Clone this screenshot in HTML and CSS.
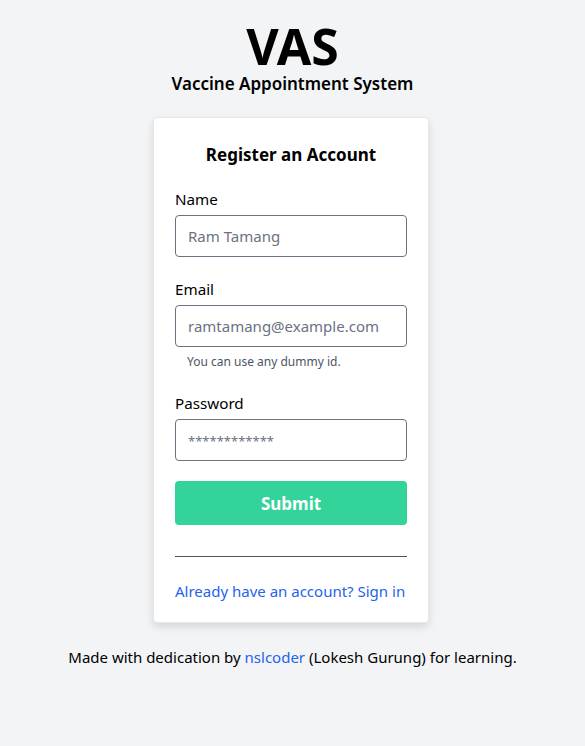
FILE: index.html
```html
<!DOCTYPE html>
<html>
<head>
<meta charset="utf-8">
<link rel="stylesheet" href="styles.css">
</head>
<body>
<main class="page">
  <header class="brand">
    <h1 class="brand-title">VAS</h1>
    <p class="brand-sub">Vaccine Appointment System</p>
  </header>
  <section class="card">
    <h2 class="card-title">Register an Account</h2>
    <form class="form">
      <div class="field">
        <label class="label">Name</label>
        <input class="input" type="text" placeholder="Ram Tamang">
      </div>
      <div class="field">
        <label class="label">Email</label>
        <input class="input" type="text" placeholder="ramtamang@example.com">
        <span class="hint">You can use any dummy id.</span>
      </div>
      <div class="field">
        <label class="label">Password</label>
        <input class="input input-pass" type="text" placeholder="************">
      </div>
      <button class="submit" type="button">Submit</button>
    </form>
    <hr class="divider">
    <a class="signin" href="#">Already have an account? Sign in</a>
  </section>
  <p class="footer">Made with dedication by <a class="footer-link" href="#">nslcoder</a> (Lokesh Gurung) for learning.</p>
</main>
</body>
</html>
```
FILE: styles.css
```css
* { box-sizing: border-box; }
html, body { margin: 0; padding: 0; }
body {
  background: #f3f4f6;
  font-family: "Noto Sans", "Open Sans", sans-serif;
  color: #000;
}
.page {
  display: flex;
  flex-direction: column;
  align-items: center;
  padding-top: 20px;
}
.brand { text-align: center; }
.brand-title {
  margin: 0;
  font-size: 50px;
  line-height: 53px;
  font-weight: 700;
}
.brand-sub {
  margin: 0;
  font-size: 17px;
  line-height: 22px;
  font-weight: 600;
}
.card {
  margin: 22px 3px 0 0;
  width: 276px;
  background: #fff;
  border: 1px solid #e5e7eb;
  border-radius: 4px;
  box-shadow: 0 4px 8px rgba(0,0,0,0.12);
  padding: 24px 21px 20px;
}
.card-title {
  margin: 0 0 20px;
  text-align: center;
  font-size: 17px;
  line-height: 26px;
  font-weight: 700;
}
.form { display: flex; flex-direction: column; }
.field { display: flex; flex-direction: column; margin-bottom: 21px; }
.label {
  font-size: 15.2px;
  line-height: 22px;
  margin-bottom: 5px;
}
.input {
  height: 42px;
  border: 1px solid #6b7280;
  border-radius: 4px;
  padding: 0 12px;
  font-family: inherit;
  font-size: 15px;
  color: #111;
  background: #fff;
}
.input::placeholder { color: #6b7280; }
.input-pass::placeholder { font-size: 13px; }
.hint {
  margin-top: 7px;
  margin-bottom: 1px;
  padding-left: 12px;
  font-size: 12px;
  line-height: 16px;
  color: #4b5563;
}
.submit {
  height: 44px;
  border: none;
  border-radius: 4px;
  background: #34d399;
  color: #fff;
  font-family: inherit;
  font-size: 17px;
  font-weight: 700;
  margin-top: -1px;
}
.divider {
  margin: 31px 0 0;
  border: none;
  border-top: 1px solid #4b5563;
}
.signin {
  display: block;
  margin-top: 23px;
  color: #2563eb;
  text-decoration: none;
  font-size: 15px;
  line-height: 22px;
  white-space: nowrap;
}
.footer {
  margin: 23px 0 0;
  font-size: 15px;
  line-height: 22px;
}
.footer-link { color: #2563eb; text-decoration: none; }
```
